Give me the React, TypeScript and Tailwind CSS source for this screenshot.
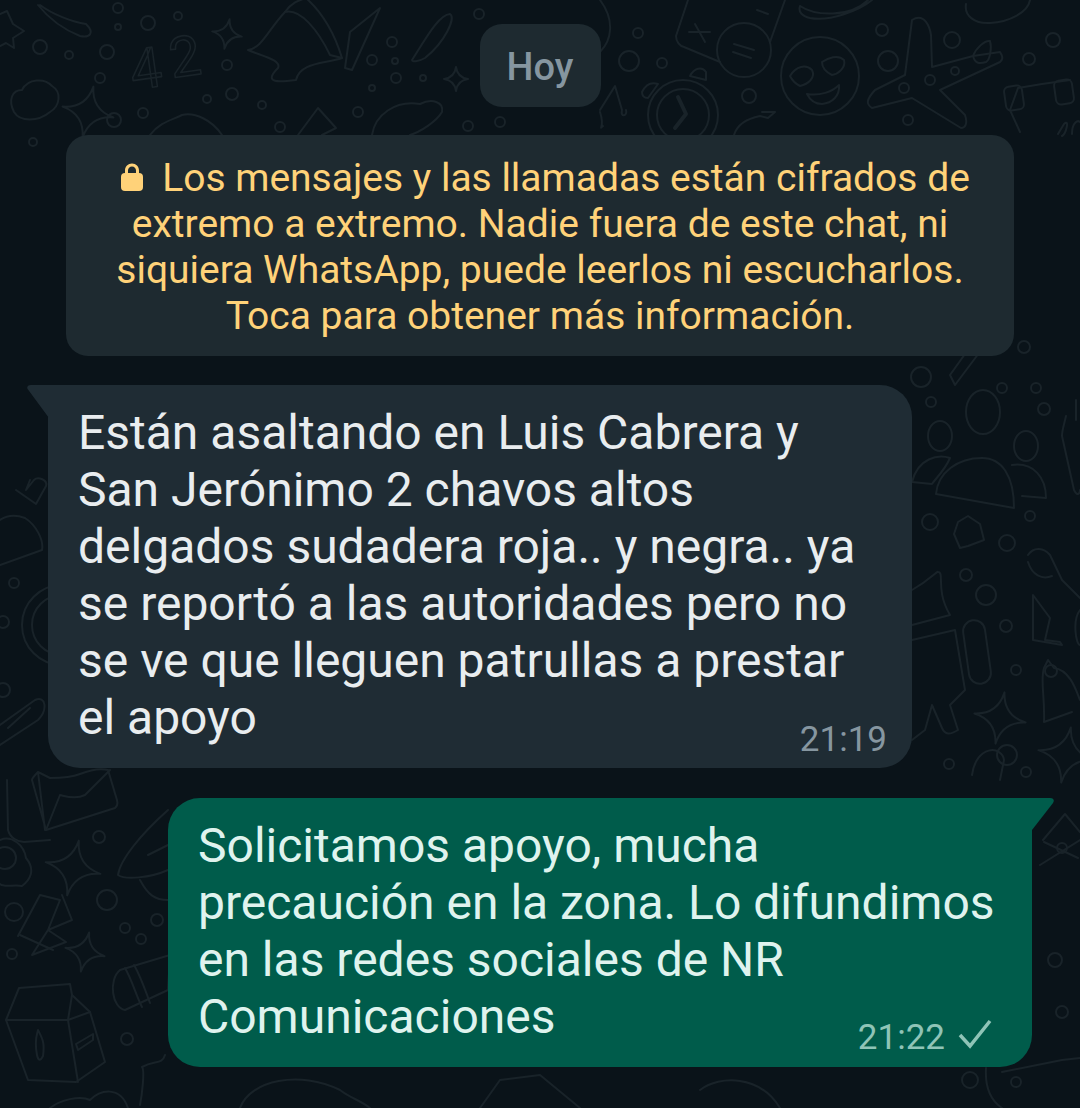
import React from 'react'

// four pointed star used all over the wallpaper
const star = (x: number, y: number, r: number, rot = 0) => (
  <path
    transform={`translate(${x} ${y}) rotate(${rot})`}
    d={`M0 ${-r}Q${r * 0.12} ${-r * 0.12} ${r} 0Q${r * 0.12} ${r * 0.12} 0 ${r}Q${-r * 0.12} ${r * 0.12} ${-r} 0Q${-r * 0.12} ${-r * 0.12} 0 ${-r}Z`}
  />
)

const dots: number[][] = [
  [40, 47, 7], [69, 55, 4], [107, 52, 7], [118, 8, 5], [118, 27, 3], [148, 23, 7], [178, 16, 4], [100, 78, 5],
  [227, 65, 5], [207, 99, 4], [232, 94, 6], [114, 120, 7], [143, 113, 5], [262, 105, 4], [358, 112, 5], [280, 127, 5],
  [468, 126, 5], [500, 122, 5], [392, 42, 5], [372, 60, 5], [395, 61, 3], [396, 78, 5], [372, 88, 3], [423, 78, 3],
  [479, 14, 5], [33, 142, 4], [638, 33, 5], [629, 61, 10], [662, 63, 5], [749, 96, 7], [882, 30, 6], [888, 61, 10],
  [952, 40, 8], [1053, 40, 7], [1029, 59, 6], [908, 120, 5],
  [1024, 347, 6], [921, 377, 10], [1002, 388, 5], [1036, 388, 5], [1044, 409, 6], [931, 402, 5],
  [930, 522, 8], [1007, 543, 8], [1030, 516, 5], [966, 575, 6], [986, 595, 10], [1006, 626, 6], [1016, 670, 5],
  [949, 764, 5], [1007, 755, 10], [1026, 772, 5], [14, 583, 5], [3, 622, 6], [3, 690, 7],
  [99, 837, 6], [14, 912, 9], [12, 954, 5], [107, 900, 10], [125, 928, 5], [157, 920, 6], [141, 939, 5], [127, 1039, 6],
  [1062, 848, 5], [1062, 1012, 6], [1055, 960, 7], [970, 1080, 8], [1016, 1082, 5],
]

const Wallpaper = () => (
  <svg
    className="absolute inset-0"
    width="1080"
    height="1108"
    viewBox="0 0 1080 1108"
    fill="none"
    stroke="#192329"
    strokeWidth="2"
    strokeLinejoin="round"
    strokeLinecap="round"
    aria-hidden="true"
  >
    {dots.map(([cx, cy, r]) => (
      <circle key={`${cx}-${cy}`} cx={cx} cy={cy} r={r} />
    ))}

    {/* top left */}
    <path d="M0 14L7 11L13 24L24 31L13 38L14 48L6 43L0 46" />
    <path d="M40 5C52 14 72 22 86 24C95 33 90 38 80 36C65 30 50 20 38 5" />
    <path d="M14 112C8 100 12 90 22 90C28 78 45 78 52 86C62 92 60 106 50 112C38 122 20 122 14 112Z" />
    {star(88, 112, 26, 12)}
    {star(227, 34, 15, 10)}
    {star(456, 79, 12, 0)}
    <text x="133" y="90" transform="rotate(-8 133 90)" fontFamily="Roboto, sans-serif" fontSize="56" strokeWidth="1.6">4</text>
    <text x="172" y="78" transform="rotate(-8 172 78)" fontFamily="Roboto, sans-serif" fontSize="56" strokeWidth="1.6">2</text>
    <path d="M248 50C262 48 268 30 285 12C300 8 318 30 330 55L342 58C325 64 300 62 296 80C280 82 262 84 278 68C282 60 262 56 248 50Z" />
    <path d="M285 12C292 2 300 0 306 -2C325 15 335 35 342 58" />
    <path d="M345 68L350 32L380 8L352 70Z" />
    <path d="M412 60C425 40 438 15 450 14C456 18 445 42 425 58C418 62 412 62 412 60Z" />
    <path d="M298 135L318 108L336 128L322 135" />
    <path d="M372 135C375 115 395 100 420 104C432 98 444 102 442 112C436 122 420 132 410 135" />
    <path d="M150 135C160 122 172 120 182 115C195 112 212 120 222 135" />

    {/* top centre right */}
    <path d="M600 0C615 20 612 40 600 52" />
    <path d="M688 0L676 36C676 42 680 46 684 47L720 62" />
    <path d="M785 0L770 42" />
    <path d="M689 32L710 32M695 24L705 42" />
    <path d="M757 10L768 14" />
    <circle cx="744" cy="50" r="27" />
    <path d="M734 44L754 50M733 52L751 58" />
    <path d="M800 6C815 16 850 18 868 0M800 6C798 12 802 16 810 18C830 22 860 10 872 0" />
    <path d="M966 4C964 16 975 24 990 23C1010 22 1028 12 1030 0" />
    <circle cx="820" cy="76" r="39" />
    <path d="M790 76C796 66 806 64 812 70C816 78 808 84 800 86C796 84 792 80 790 76Z" />
    <path d="M822 62C828 58 838 54 844 60C846 68 838 74 832 75C826 72 822 68 822 62Z" />
    <path d="M807 94C820 96 832 92 839 85C840 96 832 103 822 104C814 104 810 100 807 94Z" />
    <path d="M912 20C925 12 930 28 931 35L932 67L973 56L1000 52C1004 58 1002 60 1000 62L940 90L965 115C968 124 965 128 961 128L912 98L872 108C866 104 866 100 875 90L905 75Z" />
    <path d="M973 56C976 48 985 40 990 41C992 48 990 60 986 62C980 64 975 64 973 56Z" />
    <circle cx="904" cy="88" r="5" />
    <circle cx="930" cy="80" r="5" />
    <circle cx="955" cy="71" r="4" />
    <circle cx="683" cy="115" r="35" />
    <circle cx="683" cy="115" r="26" />
    <path d="M678 97L686 114L675 128" strokeWidth="4" />
    <path d="M642 92C646 84 652 82 658 84L648 98C644 98 642 96 642 92Z" />
    <path d="M690 76C694 68 702 66 706 72L706 80Z" />
    <path d="M600 110L615 86L622 110M603 126C598 130 605 128 600 112M622 110C620 118 628 116 626 110" />
    <path d="M734 135C738 122 750 118 760 116L768 118L775 112L762 112" />
    <path d="M1010 110L1018 88L1042 84L1070 80M1010 110L1020 132" />
    <rect x="1005" y="86" width="18" height="24" rx="5" transform="rotate(-8 1014 98)" />
    <rect x="1055" y="80" width="18" height="24" rx="5" transform="rotate(-8 1064 92)" />
    <path d="M1058 134L1064 124C1070 118 1066 134 1062 136M1072 134C1072 122 1078 120 1080 122" />

    {/* right margin */}
    <path d="M955 385L985 345L975 340L950 375Z" />
    <ellipse cx="940" cy="436" rx="12" ry="15" />
    <ellipse cx="983" cy="412" rx="17" ry="22" />
    <ellipse cx="1026" cy="446" rx="12" ry="15" />
    <path d="M936 494C938 472 958 458 982 458C1002 458 1014 476 1014 508Z" />
    <path d="M912 482C918 458 938 454 950 458C945 470 936 478 932 484Z" />
    <path d="M1012 465C1034 462 1046 478 1046 498L1022 496" />
    <path d="M958 522L968 516L980 524L984 540L968 546L960 548L954 534Z" />
    <path d="M1066 416C1064 425 1062 430 1062 436L1074 490C1078 498 1080 492 1080 490" />
    <path d="M1076 420V400" />
    <path d="M1028 555C1034 546 1044 548 1050 555L1062 580L1080 598M1028 562C1032 575 1042 580 1052 576" />
    <path d="M1033 595L1050 618L1045 640L1060 642L1062 645L1033 640Z" />
    <path d="M1080 610C1072 620 1076 645 1080 645" />
    <path d="M912 590C930 580 938 570 938 572C945 572 935 590 950 615L912 625" />
    <rect x="966" y="620" width="22" height="64" rx="11" transform="rotate(-8 977 652)" />
    <path d="M912 640L955 630L965 690L950 705L958 730C950 735 945 735 942 728L932 705L925 730L912 740" />
    {star(1000, 718, 26, 10)}
    {star(1066, 755, 28, 10)}
    <path d="M1044 668L1048 660L1054 668C1070 670 1076 690 1080 700M1044 668C1040 680 1045 695 1044 722L1072 712" />
    <circle cx="1051" cy="671" r="6" />
    <path d="M972 775C976 745 1002 745 1004 760L1000 780" />
    <path d="M1043 840L1065 814L1080 832M1044 842L1078 858M1040 865L1080 840" />

    {/* left margin */}
    <path d="M16 490L36 504L46 486C48 480 38 476 34 480L26 490L30 480" />
    <path d="M0 565L42 550C44 540 36 525 25 518C14 514 6 516 0 520" />
    <circle cx="62" cy="625" r="40" />
    <circle cx="62" cy="625" r="30" />
    <path d="M0 725L35 700C46 695 48 710 38 720L0 745M8 728L30 708" />
    <path d="M7 780L8 830C10 838 18 842 24 842L50 840" />
    <path d="M38 772L45 830M38 772C34 776 32 778 32 780L46 830L115 808C120 804 116 798 114 790L108 770C100 768 90 770 80 774C70 778 60 778 50 778Z" />
    <path d="M46 830L60 795M110 770L85 795C75 800 65 796 60 795" />
    {star(73, 868, 28, 12)}
    {star(85, 952, 20, 12)}
    <path d="M0 840C12 835 24 845 26 858C36 870 30 880 22 886C14 884 4 888 0 884" />
    <circle cx="5" cy="858" r="11" />
    <path d="M18 936L40 895L60 900L48 930L72 920L62 895M48 930L32 955L66 942L48 930" />
    <path d="M53 950L20 935" />
    <path d="M19 988L70 984L72 995L90 1012L105 1062L76 1082L28 1080L6 1020L19 988Z" />
    <path d="M6 1020L68 1020L90 1012M68 1020L78 1082M72 995L68 1020" />
    <path d="M37 1055C34 1040 37 1035 38 1030C42 1038 45 1042 43 1056C40 1062 38 1060 37 1055Z" />
    <path d="M76 1044L93 1034V1040L78 1050Z" />
    <path d="M50 1108C60 1100 80 1095 90 1100C100 1090 120 1085 128 1108M140 1105C142 1095 145 1070 142 1067C155 1060 162 1065 165 1055" />
    <path d="M120 970L170 955L168 990L125 1010C112 1008 108 980 120 970Z" />
    <path d="M125 968C132 980 136 995 142 1007M134 965C140 975 146 992 150 1003" />
    <path d="M168 810C140 835 120 860 118 875C125 880 150 878 168 870" />
    <path d="M148 855L168 845" />
    <path d="M140 880C148 895 155 900 168 900" />

    {/* bottom strip */}
    <path d="M240 1108C250 1080 300 1070 340 1090C350 1098 360 1100 370 1108" />
    <path d="M480 1108L500 1080L540 1075L580 1108" />
    <path d="M700 1090C720 1075 760 1075 780 1108" />
    <path d="M1002 1072L1062 1060L1080 1058M986 1068C985 1085 990 1100 1002 1108" />
  </svg>
)

const Tail = ({ fill, side }: { fill: string; side: 'left' | 'right' }) => (
  <svg
    className={side === 'left' ? 'absolute left-[-21px] top-0' : 'absolute right-[-22px] top-0'}
    width="24"
    height="34"
    viewBox="0 0 24 34"
  >
    {side === 'left' ? (
      <path d="M24 0H4C0 0-.5 3 1 4.500L22 33H24Z" fill={fill} />
    ) : (
      <path d="M0 0H20C24 0 24.500 3 23 5L2 32H0Z" fill={fill} />
    )}
  </svg>
)

export default function App() {
  return (
    <div className="relative h-[1108px] w-[1080px] overflow-hidden bg-[#0a1319] font-['Roboto',sans-serif]">
      <Wallpaper />

      <div className="relative flex flex-col pt-6">
        {/* Date chip */}
        <div className="flex h-[83px] w-[121px] items-center justify-center self-center rounded-[22px] bg-[#1e2a30] pt-[3px] text-[38px] font-medium text-[#8696a0]">
          Hoy
        </div>

        {/* Encryption notice */}
        <div className="mx-[66px] mt-7 h-[221px] rounded-[22px] bg-[#1e2a30] pt-5 text-center text-[39px] leading-[46px] text-[#ffd279]">
          <svg className="ml-[10px] mr-[18px] inline-block align-[-1px]" width="24" height="30" viewBox="0 0 24 30" fill="#ffd279">
            <path d="M5 12V8.500C5 4.500 8 1.500 12 1.500S19 4.500 19 8.500V12H16V8.500C16 6.200 14.300 4.500 12 4.500S8 6.200 8 8.500V12Z" />
            <rect x="1" y="11" width="22" height="18" rx="4" />
          </svg>
          Los mensajes y las llamadas están cifrados de
          <br />
          extremo a extremo. Nadie fuera de este chat, ni
          <br />
          siquiera WhatsApp, puede leerlos ni escucharlos.
          <br />
          Toca para obtener más información.
        </div>

        {/* Incoming */}
        <div className="relative ml-12 mt-[29px] h-[383px] w-[864px] rounded-[32px] rounded-tl-none bg-[#1f2c34] pl-[30px] pt-[19px] text-[48px] leading-[57px] text-[#e9edef]">
          <Tail fill="#1f2c34" side="left" />
          Están asaltando en Luis Cabrera y
          <br />
          San Jerónimo 2 chavos altos
          <br />
          delgados sudadera roja.. y negra.. ya
          <br />
          se reportó a las autoridades pero no
          <br />
          se ve que lleguen patrullas a prestar
          <br />
          el apoyo
          <span className="absolute bottom-[8px] right-[25px] text-[35px] leading-[40px] text-[#8696a0]">21:19</span>
        </div>

        {/* Outgoing */}
        <div className="relative ml-[168px] mt-[30px] h-[269px] w-[864px] rounded-[32px] rounded-tr-none bg-[#005c4b] pl-[30px] pt-[19px] text-[48px] leading-[57px] text-[#dff3ee]">
          <Tail fill="#005c4b" side="right" />
          Solicitamos apoyo, mucha
          <br />
          precaución en la zona. Lo difundimos
          <br />
          en las redes sociales de NR
          <br />
          Comunicaciones
          <span className="absolute bottom-[9px] right-[87px] text-[35px] leading-[40px] text-[#8fc4b7]">21:22</span>
          <svg className="absolute bottom-[18px] right-[40px]" width="34" height="30" viewBox="0 0 34 30" fill="none" stroke="#8fc4b7" strokeWidth="3.500">
            <path d="M2 16L12 27L32 2" />
          </svg>
        </div>
      </div>
    </div>
  )
}
